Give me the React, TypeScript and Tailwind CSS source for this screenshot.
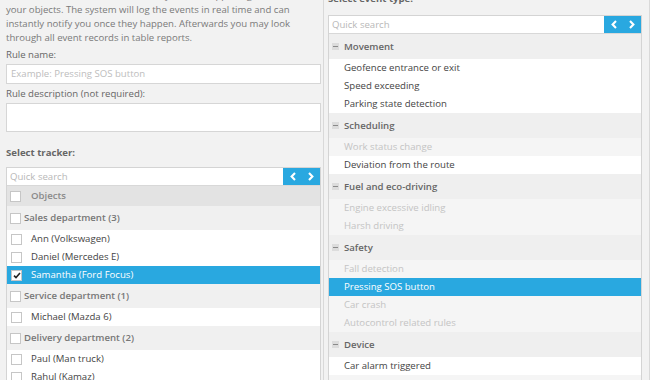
import React from "react";

const BLUE = "bg-[#29a8e0]";

function Chevron({ dir }: { dir: "l" | "r" }) {
  return (
    <svg width="6" height="9" viewBox="0 0 6 9">
      <polyline
        points={dir === "l" ? "5,1 1.6,4.5 5,8" : "1,1 4.4,4.5 1,8"}
        fill="none"
        stroke="white"
        strokeWidth="2.1"
      />
    </svg>
  );
}

function SearchRow({ h }: { h: string }) {
  return (
    <div className={`flex ${h} border-b border-[#d8d8d8]`}>
      <div className="flex flex-1 items-center pl-[3px] text-[#b8b8b8]">Quick search</div>
      <div className={`flex w-[37px] items-center justify-center gap-[12px] ${BLUE}`}>
        <Chevron dir="l" />
        <Chevron dir="r" />
      </div>
    </div>
  );
}

function Box({ checked = false }: { checked?: boolean }) {
  return (
    <span className="flex h-[11px] w-[11px] shrink-0 items-center justify-center border border-[#c6c6c6] bg-white">
      {checked && (
        <svg width="8" height="7" viewBox="0 0 8 7">
          <polyline points="1,3.6 3,5.6 7,1" fill="none" stroke="#222" strokeWidth="1.6" />
        </svg>
      )}
    </span>
  );
}

function Minus() {
  return (
    <span className="flex h-[7px] w-[7px] shrink-0 items-center justify-center bg-[#dcdcdc]">
      <span className="block h-[1px] w-[5px] bg-[#8a8a8a]" />
    </span>
  );
}

type TItem = { kind: "group" | "item"; label: string; sel?: boolean };

const trackers: TItem[] = [
  { kind: "group", label: "Sales department (3)" },
  { kind: "item", label: "Ann (Volkswagen)" },
  { kind: "item", label: "Daniel (Mercedes E)" },
  { kind: "item", label: "Samantha (Ford Focus)", sel: true },
  { kind: "group", label: "Service department (1)" },
  { kind: "item", label: "Michael (Mazda 6)" },
  { kind: "group", label: "Delivery department (2)" },
  { kind: "item", label: "Paul (Man truck)" },
  { kind: "item", label: "Rahul (Kamaz)" },
];

type EItem = { kind: "head" | "on" | "off" | "sel"; label: string };

const events: EItem[] = [
  { kind: "head", label: "Movement" },
  { kind: "on", label: "Geofence entrance or exit" },
  { kind: "on", label: "Speed exceeding" },
  { kind: "on", label: "Parking state detection" },
  { kind: "head", label: "Scheduling" },
  { kind: "off", label: "Work status change" },
  { kind: "on", label: "Deviation from the route" },
  { kind: "head", label: "Fuel and eco-driving" },
  { kind: "off", label: "Engine excessive idling" },
  { kind: "off", label: "Harsh driving" },
  { kind: "head", label: "Safety" },
  { kind: "off", label: "Fall detection" },
  { kind: "sel", label: "Pressing SOS button" },
  { kind: "off", label: "Car crash" },
  { kind: "off", label: "Autocontrol related rules" },
  { kind: "head", label: "Device" },
  { kind: "on", label: "Car alarm triggered" },
  { kind: "off", label: "Device turned off or lost connection" },
];

export default function App() {
  return (
    <div
      className="flex h-[380px] w-[650px] overflow-hidden bg-[#f2f2f2] text-[9.6px] leading-[14px]"
      style={{ fontFamily: '"Open Sans", "Liberation Sans", sans-serif' }}
    >
      {/* Left column */}
      <div className="w-[324px] shrink-0 border-r border-[#d9d9d9] pl-[6px] pr-[2px]">
        <p className="-mt-[11px] text-[#7a7a7a]">
          Create rules to be notified about any events happening to
          <br />
          your objects. The system will log the events in real time and can
          <br />
          instantly notify you once they happen. Afterwards you may look
          <br />
          through all event records in table reports.
        </p>
        <div className="mt-[3px] text-[#666]">Rule name:</div>
        <div className="mt-[2px] flex h-[20px] items-center border border-[#d6d6d6] bg-white pl-[4px] text-[#bdbdbd]">
          Example: Pressing SOS button
        </div>
        <div className="mt-[3px] text-[#666]">Rule description (not required):</div>
        <div className="mt-[2px] h-[29px] border border-[#d6d6d6] bg-white" />
        <div className="mt-[14px] font-bold text-[#666]">Select tracker:</div>
        <div className="mt-[7px] border border-[#d4d4d4] bg-white">
          <SearchRow h="h-[18px]" />
          <div className="flex h-[20px] items-center bg-[#e3e3e3] pl-[3px]">
            <Box />
            <span className="ml-[10px] font-semibold text-[#8a8a8a]">Objects</span>
          </div>
          {trackers.map((t, i) =>
            t.kind === "group" ? (
              <div key={i} className="flex h-[24px] items-center bg-[#f0f0f0] pl-[3px]">
                <Box />
                <span className="ml-[3px] font-semibold text-[#777]">{t.label}</span>
              </div>
            ) : (
              <div
                key={i}
                className={`flex h-[18px] items-center pl-[4px] ${t.sel ? `${BLUE} text-white` : "bg-white text-[#444]"}`}
              >
                <Box checked={t.sel} />
                <span className="ml-[9px]">{t.label}</span>
              </div>
            )
          )}
        </div>
      </div>

      {/* Right column */}
      <div className="w-[326px] shrink-0 border-r border-[#d9d9d9] pl-[4px] pr-[7px]">
        <div className="-mt-[8px] font-bold text-[#666]">Select event type:</div>
        <div className="mt-[9px] border border-[#d4d4d4] bg-white">
          <SearchRow h="h-[18px]" />
          {events.map((e, i) =>
            e.kind === "head" ? (
              <div key={i} className="flex h-[25px] items-center bg-[#efefef] pl-[3px]">
                <Minus />
                <span className="ml-[5px] font-semibold text-[#666]">{e.label}</span>
              </div>
            ) : (
              <div
                key={i}
                className={`flex h-[18px] items-center pl-[15px] ${
                  e.kind === "sel"
                    ? `${BLUE} text-white`
                    : e.kind === "on"
                    ? "bg-white text-[#444]"
                    : "bg-[#f5f5f5] text-[#c4c4c4]"
                }`}
              >
                {e.label}
              </div>
            )
          )}
        </div>
      </div>
    </div>
  );
}
